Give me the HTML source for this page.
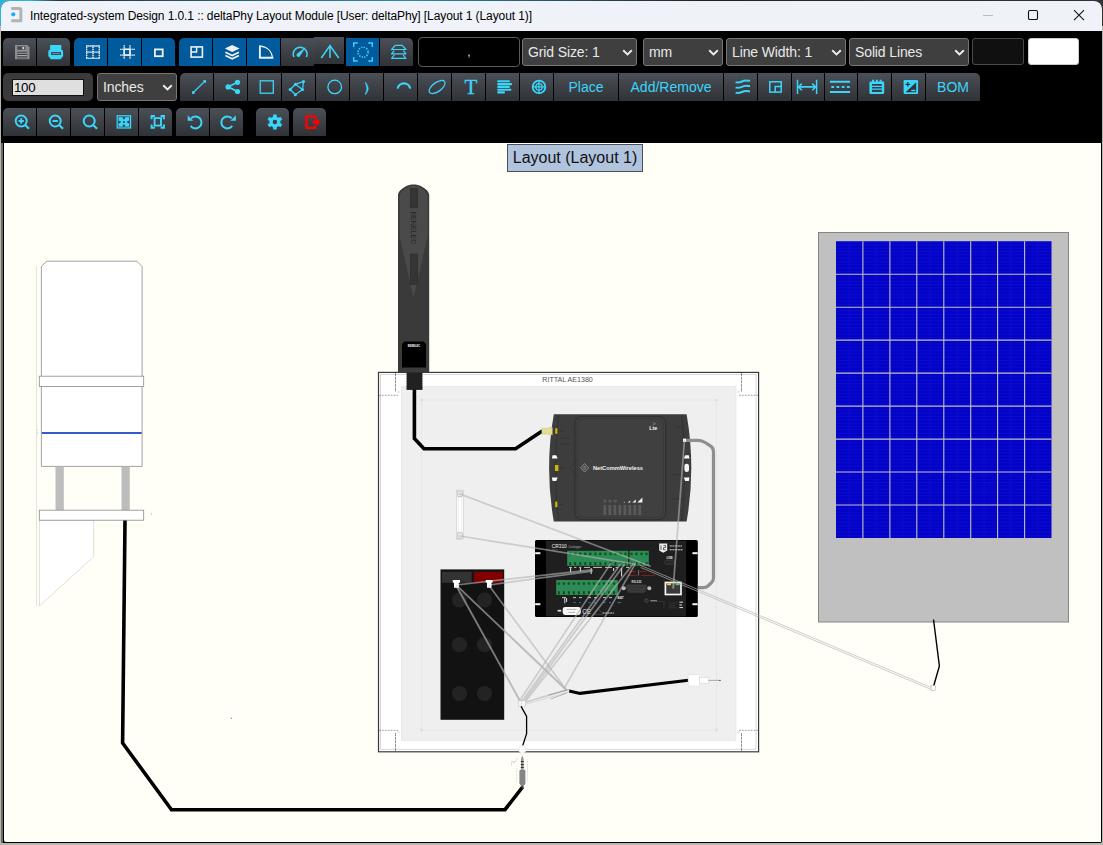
<!DOCTYPE html>
<html lang="en">
<head>
<meta charset="utf-8">
<title>Integrated-system Design 1.0.1 :: deltaPhy Layout Module</title>
<style>
*{box-sizing:border-box;margin:0;padding:0}
html,body{width:1103px;height:845px;overflow:hidden;background:#1b2a33;font-family:"Liberation Sans",Arial,sans-serif}
#desk{position:absolute;left:0;top:0;width:1103px;height:845px;background:linear-gradient(90deg,#2bb5d8 0,#2bb5d8 30px,#243038 60px,#2d8aa8 400px,#222 700px,#333 1103px)}
#edgeL{position:absolute;left:0;top:26px;width:1103px;height:819px;background:#b7b7b2}
#win{position:absolute;left:1px;top:1px;width:1101px;height:842px;background:#000;border-radius:8px 8px 2px 2px;overflow:hidden}
#stripL{position:absolute;left:0;top:142px;width:2px;height:700px;background:#6a6a6a}
#title{position:absolute;left:0;top:0;width:1101px;height:30px;background:#eff3f9}
#title .cap{position:absolute;left:29px;top:7px;font-size:12px;line-height:16px;color:#000;white-space:nowrap;letter-spacing:-0.095px}
#title svg{position:absolute}
/* toolbar */
.b{position:absolute;width:33px;height:28px;background:linear-gradient(#4b4f57,#2f3236);color:#3bd5fa;font-size:14px;line-height:28px;text-align:center;white-space:nowrap}
.b.on{background:#005a9c}
.b svg{position:absolute;left:0;top:0;width:100%;height:100%;overflow:visible}
.tl{border-top-left-radius:5px}
.tr{border-top-right-radius:5px}
.sel{position:absolute;height:28px;background:#3f3f3f;border:1px solid #767676;border-radius:3px;color:#e8e8e8;font-size:14px;line-height:27px;padding-left:5px;letter-spacing:-0.12px;white-space:nowrap}
.sel svg{position:absolute;right:3.5px;top:9.5px;width:11px;height:7px}
#canvas{position:absolute;left:3px;top:142px;width:1097px;height:699px;border-radius:0 0 0 2px;background:#fffff8;overflow:hidden}
#canvas svg{position:absolute;left:0;top:0}
</style>
</head>
<body>
<div id="desk"></div>
<div id="edgeL"></div>
<div id="win">
 <div id="title">
  <svg style="left:8px;top:5px" width="16" height="18" viewBox="0 0 16 18"><path d="M2.2 1.1H10.5Q13.3 1.1 13.3 3.9V16.3H2.2V13.3H10.3V4.1H2.2Z" fill="#b3b3b3"/><circle cx="4.3" cy="8.3" r="2.1" fill="#2aa8ff"/></svg>
  <div class="cap">Integrated-system Design 1.0.1 :: deltaPhy Layout Module [User: deltaPhy] [Layout 1 (Layout 1)]</div>
  <svg style="left:980px;top:8px" width="110" height="14" viewBox="0 0 110 14"><path d="M2 6.5H12" stroke="#b9bcc1" stroke-width="1"/><rect x="47.5" y="1.5" width="9" height="9" rx="1.3" fill="none" stroke="#111" stroke-width="1.1"/><path d="M93 1.2L103 11.2M103 1.2L93 11.2" stroke="#111" stroke-width="1.1"/></svg>
 </div>
 <div id="tb" style="position:absolute;left:-1px;top:-1px">
<div class="b tl" style="left:3px;top:38px"><svg viewBox="0 0 33 28"><path d="M12 7H24.3L26.5 9.2V21.2H12Z" fill="#8c8c8c"/><rect x="14.2" y="8.4" width="8.2" height="3.3" fill="#45484e"/><rect x="19.3" y="8.9" width="1.9" height="2.3" fill="#cfcfcf"/><rect x="14.2" y="13.8" width="10" height="7.4" fill="#3a3d42"/><path d="M14.2 15.2H24.2M14.2 17.6H24.2M14.2 20H24.2" stroke="#a8a8a8" stroke-width="1.1"/></svg></div>
<div class="b tr" style="left:37px;top:38px"><svg viewBox="0 0 33 28"><rect x="13.1" y="6.9" width="11.2" height="5.5" rx="0.6" fill="#3bd5fa"/><rect x="11.3" y="11.4" width="14.8" height="8.6" rx="2.4" fill="#3bd5fa"/><rect x="13.1" y="18.5" width="11.2" height="2.8" rx="0.8" fill="#3bd5fa"/><rect x="14" y="14.2" width="10" height="2.6" fill="#2f3338"/><rect x="14.6" y="15" width="8.8" height="1" fill="#70808a"/></svg></div>
<div class="b on tl" style="left:74px;top:38px"><svg viewBox="0 0 33 28"><path d="M12 8H26M12 14.2H26M12 20.4H26M12.65 7.4V21M19 7.4V21M25.35 7.4V21" stroke="#f0f0f0" stroke-width="1.3" stroke-dasharray="1.2 0.8" stroke-dashoffset="0.5" fill="none"/><path d="M12 8H26M12 14.2H26M12 20.4H26M12.65 7.4V21M19 7.4V21M25.35 7.4V21" stroke="#f0f0f0" stroke-width="1.3" stroke-opacity="0.4" fill="none"/></svg></div>
<div class="b on" style="left:108px;top:38px"><svg viewBox="0 0 33 28"><path d="M16.2 7V21M22 7V21M12 11.3H27M12 17.1H27" stroke="#f0f0f0" stroke-width="1.3" stroke-dasharray="1.2 0.8" stroke-dashoffset="0.4" fill="none"/><path d="M16.2 7V21M22 7V21M12 11.3H27M12 17.1H27" stroke="#f0f0f0" stroke-width="1.3" stroke-opacity="0.3" fill="none"/><rect x="16.2" y="11.3" width="5.8" height="5.8" fill="none" stroke="#f0f0f0" stroke-width="1.5"/></svg></div>
<div class="b on tr" style="left:142px;top:38px"><svg viewBox="0 0 33 28"><rect x="12.9" y="11.4" width="7.8" height="6.8" fill="none" stroke="#f0f0f0" stroke-width="1.8"/></svg></div>
<div class="b on tl" style="left:179px;top:38px"><svg viewBox="0 0 33 28"><rect x="12.1" y="8.9" width="11.3" height="10.2" fill="none" stroke="#f0f0f0" stroke-width="1.6"/><path d="M17.6 8.9V13.9H12.1" fill="none" stroke="#f0f0f0" stroke-width="1.5"/></svg></div>
<div class="b on" style="left:213px;top:38px"><svg viewBox="0 0 33 28"><path d="M19.2 6.9L26.6 10.5L19.2 14.1L11.8 10.5Z" fill="#f0f0f0"/><path d="M12.4 14.3L19.2 17.6L26 14.3M12.4 17.5L19.2 20.8L26 17.5" fill="none" stroke="#f0f0f0" stroke-width="1.7" stroke-linejoin="miter"/></svg></div>
<div class="b on" style="left:247px;top:38px"><svg viewBox="0 0 33 28"><path d="M12.9 7.4V19.7H26.4" fill="none" stroke="#f0f0f0" stroke-width="1.9"/><path d="M12.9 8.1C20 8.6 24.8 13 25.5 19.7" fill="none" stroke="#f0f0f0" stroke-width="1.2"/></svg></div>
<div class="b" style="left:281px;top:38px"><svg viewBox="0 0 33 28"><path d="M12.9 19A6.9 6.9 0 1 1 25.4 19" fill="none" stroke="#3bd5fa" stroke-width="1.5"/><path d="M24.9 9.1L19.4 17.6A2 2 0 1 1 16.6 15.2Z" fill="#3bd5fa"/></svg></div>
<div class="b raised" style="left:314px;top:37px;width:30px;height:27px"><svg viewBox="0 0 30 27"><path d="M7.3 21L16 8.6L24.7 21M16 8.6V21" fill="none" stroke="#3bd5fa" stroke-width="1.5"/></svg></div>
<div class="b on" style="left:346px;top:38px"><svg viewBox="0 0 33 28"><path d="M7.7 9V5H11.7M22.3 5H26.3V9M26.3 19V23H22.3M11.7 23H7.7V19" fill="none" stroke="#3bd5fa" stroke-width="1.4"/><circle cx="17.1" cy="14.2" r="5" fill="none" stroke="#3bd5fa" stroke-width="1.7" stroke-dasharray="1.3 1.32"/></svg></div>
<div class="b tr" style="left:380px;top:38px"><svg viewBox="0 0 33 28"><path d="M15.2 7.3H22.3L25.9 11.5H11.6Z" fill="none" stroke="#3bd5fa" stroke-width="1.2" stroke-linejoin="round"/><path d="M14.1 12.6L11.6 15.9H25.9L23.4 12.6" fill="none" stroke="#3bd5fa" stroke-width="1.2" stroke-linejoin="round"/><path d="M14.4 16.9L11.6 20.4H25.9L23.1 16.9" fill="none" stroke="#3bd5fa" stroke-width="1.2" stroke-linejoin="round"/></svg></div>
<div id="coord" style="position:absolute;left:418px;top:37px;width:102px;height:30px;border:1px solid #5a5a5a;border-radius:4px;background:#000;color:#ddd;font-size:12px;line-height:28px;text-align:center">,</div>
<div class="sel" style="left:522px;top:38px;width:115px">Grid Size: 1<svg viewBox="0 0 11 7"><path d="M1.2 1.2L5.5 5.4L9.8 1.2" fill="none" stroke="#eee" stroke-width="1.9"/></svg></div>
<div class="sel" style="left:643px;top:38px;width:80px">mm<svg viewBox="0 0 11 7"><path d="M1.2 1.2L5.5 5.4L9.8 1.2" fill="none" stroke="#eee" stroke-width="1.9"/></svg></div>
<div class="sel" style="left:726px;top:38px;width:120px">Line Width: 1<svg viewBox="0 0 11 7"><path d="M1.2 1.2L5.5 5.4L9.8 1.2" fill="none" stroke="#eee" stroke-width="1.9"/></svg></div>
<div class="sel" style="left:849px;top:38px;width:120px">Solid Lines<svg viewBox="0 0 11 7"><path d="M1.2 1.2L5.5 5.4L9.8 1.2" fill="none" stroke="#eee" stroke-width="1.9"/></svg></div>
<div style="position:absolute;left:972px;top:38px;width:52px;height:27px;border:1px solid #4a4a4a;border-radius:3px;background:#101010"></div>
<div style="position:absolute;left:1028px;top:38px;width:51px;height:27px;border:1px solid #ccc;border-radius:3px;background:#fff"></div>
<div style="position:absolute;left:3px;top:73px;width:90px;height:28px;border-radius:5px;background:#3a3a3a"></div>
<div style="position:absolute;left:12px;top:79px;width:72px;height:17px;background:#dfdfdf;border:1px solid #111;color:#000;font-size:13.3px;line-height:15px;padding-left:1px;letter-spacing:-0.3px">100</div>
<div class="sel" style="left:97px;top:73px;width:80px">Inches<svg viewBox="0 0 11 7"><path d="M1.2 1.2L5.5 5.4L9.8 1.2" fill="none" stroke="#eee" stroke-width="1.9"/></svg></div>
<div class="b tl" style="left:180px;top:73px"><svg viewBox="0 0 33 28"><path d="M13.3 19.5L24.7 8.4" stroke="#3bd5fa" stroke-width="1.3"/><rect x="12" y="18.3" width="2.6" height="2.6" fill="#3bd5fa"/><rect x="23.4" y="7.1" width="2.6" height="2.6" fill="#3bd5fa"/></svg></div>
<div class="b" style="left:214px;top:73px"><svg viewBox="0 0 33 28"><path d="M23.5 9.3L14.1 13.9L23.5 18.5" fill="none" stroke="#3bd5fa" stroke-width="1.8"/><circle cx="14.1" cy="13.9" r="2.6" fill="#3bd5fa"/><circle cx="23.5" cy="9.3" r="2.6" fill="#3bd5fa"/><circle cx="23.5" cy="18.5" r="2.6" fill="#3bd5fa"/></svg></div>
<div class="b" style="left:248px;top:73px"><svg viewBox="0 0 33 28"><rect x="12.2" y="7.8" width="13.1" height="12.4" fill="none" stroke="#3bd5fa" stroke-width="1.3"/></svg></div>
<div class="b" style="left:282px;top:73px"><svg viewBox="0 0 33 28"><path d="M8.1 16.5L13.4 11.3L21.5 8.5L20.5 16.5L13.4 21.7ZM13.4 11.3L20.5 16.5" fill="none" stroke="#3bd5fa" stroke-width="1.3"/><circle cx="8.1" cy="16.5" r="1.5" fill="#3bd5fa"/><circle cx="13.4" cy="11.3" r="1.5" fill="#3bd5fa"/><circle cx="21.5" cy="8.5" r="1.5" fill="#3bd5fa"/><circle cx="20.5" cy="16.5" r="1.5" fill="#3bd5fa"/><circle cx="13.4" cy="21.7" r="1.5" fill="#3bd5fa"/></svg></div>
<div class="b" style="left:316px;top:73px"><svg viewBox="0 0 33 28"><circle cx="18.7" cy="13.9" r="6.8" fill="none" stroke="#3bd5fa" stroke-width="1.3"/></svg></div>
<div class="b" style="left:350px;top:73px"><svg viewBox="0 0 33 28"><path d="M15.4 9.2Q21 15.5 15.4 21.7Q18.4 15.5 15.4 9.2Z" fill="#3bd5fa" stroke="#3bd5fa" stroke-width="0.7"/></svg></div>
<div class="b" style="left:384px;top:73px"><svg viewBox="0 0 33 28"><path d="M13.6 15.6A6.4 6.4 0 0 1 26.2 15.6" fill="none" stroke="#3bd5fa" stroke-width="2.2"/></svg></div>
<div class="b" style="left:418px;top:73px"><svg viewBox="0 0 33 28"><ellipse cx="19.1" cy="14" rx="9.3" ry="4.5" transform="rotate(-36 19.1 14)" fill="none" stroke="#3bd5fa" stroke-width="1.3"/></svg></div>
<div class="b" style="left:452px;top:73px"><svg viewBox="0 0 33 28"><text x="19" y="20.8" font-family="Liberation Serif,serif" font-size="21" text-anchor="middle" fill="#3bd5fa" stroke="#3bd5fa" stroke-width="0.3">T</text></svg></div>
<div class="b" style="left:486px;top:73px"><svg viewBox="0 0 33 28"><path d="M11.4 8.3H23.7M11.4 11.1H25.9M11.4 13.9H23.7M11.4 16.7H25.3M11.4 19.4H18.8" stroke="#3bd5fa" stroke-width="2.1"/></svg></div>
<div class="b" style="left:520px;top:73px"><svg viewBox="0 0 33 28"><circle cx="19" cy="13.9" r="6.3" fill="none" stroke="#3bd5fa" stroke-width="1.8"/><circle cx="19" cy="13.9" r="3.2" fill="none" stroke="#3bd5fa" stroke-width="1.3"/><path d="M19 7V20.8M12 13.9H26" stroke="#3bd5fa" stroke-width="1.2"/></svg></div>
<div class="b" style="left:554px;top:73px;width:64px">Place</div>
<div class="b" style="left:619px;top:73px;width:104px">Add/Remove</div>
<div class="b" style="left:724px;top:73px"><svg viewBox="0 0 33 28"><path d="M11.6 9.1C15 10.5 17.6 8.4 20 7.8 C22.5 7.199999999999999 24 7.8 26 7.8" fill="none" stroke="#3bd5fa" stroke-width="2"/><path d="M11.6 14.4C15 15.8 17.6 13.700000000000001 20 13.1 C22.5 12.5 24 13.1 26 13.1" fill="none" stroke="#3bd5fa" stroke-width="2"/><path d="M11.6 19.6C15 21.0 17.6 18.900000000000002 20 18.3 C22.5 17.700000000000003 24 18.3 26 18.3" fill="none" stroke="#3bd5fa" stroke-width="2"/></svg></div>
<div class="b" style="left:758px;top:73px"><svg viewBox="0 0 33 28"><rect x="11.8" y="8.8" width="11.4" height="10.3" fill="none" stroke="#3bd5fa" stroke-width="1.5"/><path d="M17.2 19V13.6H23.1" fill="none" stroke="#3bd5fa" stroke-width="1.5"/></svg></div>
<div class="b" style="left:792px;top:73px;width:32px"><svg viewBox="0 0 32 28"><path d="M5.5 6.8V21.1M24.6 6.8V21.1" stroke="#3bd5fa" stroke-width="1.5"/><path d="M6.5 13.9H23.6" stroke="#3bd5fa" stroke-width="1.6"/><path d="M9.8 10.6L6.5 13.9L9.8 17.2M20.3 10.6L23.6 13.9L20.3 17.2" fill="none" stroke="#3bd5fa" stroke-width="1.5"/></svg></div>
<div class="b" style="left:825px;top:73px;width:32px"><svg viewBox="0 0 32 28"><path d="M4.9 8.8H25.1M4.9 18.9H25.1" stroke="#3bd5fa" stroke-width="2"/><path d="M6.3 13.9H25.1" stroke="#3bd5fa" stroke-width="2" stroke-dasharray="2.8 2.4"/></svg></div>
<div class="b" style="left:858px;top:73px"><svg viewBox="0 0 33 28"><rect x="11.4" y="8.6" width="14.8" height="12.4" rx="1.2" fill="#3bd5fa"/><rect x="14" y="6.7" width="2" height="3" fill="#3bd5fa"/><rect x="17.8" y="6.7" width="2" height="3" fill="#3bd5fa"/><rect x="21.6" y="6.7" width="2" height="3" fill="#3bd5fa"/><rect x="14" y="11" width="9.8" height="8" fill="#33404a"/><path d="M14 13.4H23.8M14 16.2H23.8" stroke="#3bd5fa" stroke-width="1.3"/></svg></div>
<div class="b" style="left:892px;top:73px"><svg viewBox="0 0 33 28"><rect x="11.6" y="7.1" width="14.5" height="13.9" rx="1.2" fill="#3bd5fa"/><path d="M24.2 9.2V19.2H13.6Z" fill="#2f343a"/><path d="M15.8 9V13.6M13.5 11.3H18.1" stroke="#2f343a" stroke-width="1.3"/><path d="M19.2 17.4H23.4" stroke="#3bd5fa" stroke-width="1.5"/></svg></div>
<div class="b tr" style="left:926px;top:73px;width:54px">BOM</div>
<div class="b tl" style="left:3px;top:108px"><svg viewBox="0 0 33 28"><circle cx="18.2" cy="13" r="5.5" fill="none" stroke="#3bd5fa" stroke-width="2"/><path d="M22.2 17L26 20.7" stroke="#3bd5fa" stroke-width="2.1"/><path d="M18.2 10.3V15.7M15.5 13H20.9" stroke="#3bd5fa" stroke-width="1.9"/></svg></div>
<div class="b" style="left:37px;top:108px"><svg viewBox="0 0 33 28"><circle cx="18.2" cy="13" r="5.5" fill="none" stroke="#3bd5fa" stroke-width="2"/><path d="M22.2 17L26 20.7" stroke="#3bd5fa" stroke-width="2.1"/><path d="M15.5 13H20.9" stroke="#3bd5fa" stroke-width="1.9"/></svg></div>
<div class="b" style="left:71px;top:108px"><svg viewBox="0 0 33 28"><circle cx="18.2" cy="13" r="5.5" fill="none" stroke="#3bd5fa" stroke-width="2"/><path d="M22.2 17L26 20.7" stroke="#3bd5fa" stroke-width="2.1"/></svg></div>
<div class="b" style="left:105px;top:108px"><svg viewBox="0 0 33 28"><rect x="12.2" y="7.8" width="13.4" height="12.2" fill="#3bd5fa" stroke="#3bd5fa" stroke-width="1.2"/><rect x="13.2" y="8.8" width="11.4" height="10.2" fill="none" stroke="#34424c" stroke-width="0.7"/><path d="M17.2 9.2H20.6L18.9 11.8ZM17.2 18.6H20.6L18.9 16ZM13.6 12.4V15.4L16.4 13.9ZM24.2 12.4V15.4L21.4 13.9Z" fill="#2c3a44"/><circle cx="18.9" cy="13.9" r="1" fill="#2c3a44"/></svg></div>
<div class="b tr" style="left:139px;top:108px"><svg viewBox="0 0 33 28"><path d="M12.6 11.2V7.9H15.9M21.6 7.9H24.9V11.2M24.9 16.5V19.8H21.6M15.9 19.8H12.6V16.5" fill="none" stroke="#3bd5fa" stroke-width="2"/><rect x="15.6" y="10.1" width="6.4" height="7.5" fill="none" stroke="#3bd5fa" stroke-width="1.9"/></svg></div>
<div class="b tl" style="left:176px;top:108px"><svg viewBox="0 0 33 28"><path d="M14.6 17.9A6 6 0 1 0 15.2 10.2" fill="none" stroke="#3bd5fa" stroke-width="2"/><path d="M11.7 7.2V12.7H17.2Z" fill="#3bd5fa"/></svg></div>
<div class="b tr" style="left:210px;top:108px"><svg viewBox="0 0 33 28"><path d="M22.2 17.9A6 6 0 1 1 21.6 10.2" fill="none" stroke="#3bd5fa" stroke-width="2"/><path d="M25.9 7.2V12.7H20.4Z" fill="#3bd5fa"/></svg></div>
<div class="b tl tr" style="left:256px;top:108px"><svg viewBox="0 0 33 28"><path d="M17.24 9.07L17.51 6.73L20.29 6.73L20.56 9.07L22.34 10.10L24.50 9.16L25.89 11.57L24.00 12.97L24.00 15.03L25.89 16.43L24.50 18.84L22.34 17.90L20.56 18.93L20.29 21.27L17.51 21.27L17.24 18.93L15.46 17.90L13.30 18.84L11.91 16.43L13.80 15.03L13.80 12.97L11.91 11.57L13.30 9.16L15.46 10.10Z" fill="#3bd5fa" stroke="#3bd5fa" stroke-width="0.6" stroke-linejoin="round"/><circle cx="18.9" cy="14" r="2.2" fill="#383c42"/></svg></div>
<div class="b tl tr" style="left:293px;top:108px"><svg viewBox="0 0 33 28"><path d="M22 10.6V8.3H13.4V19.8H22V17.4" fill="none" stroke="#f00" stroke-width="2.3"/><path d="M20 12.2H23.6V9.6L27.2 14L23.6 18.4V15.8H20Z" fill="#f00"/></svg></div>
 </div>
 <div id="stripL"></div>
 <div id="canvas">
<svg width="1097" height="699" viewBox="4 143 1097 699" font-family="Liberation Sans,Arial,sans-serif">
<!-- title label -->
<rect x="507.5" y="144.5" width="135" height="27" fill="#b0c4de" stroke="#4a4f58" stroke-width="1"/>
<text x="575" y="163.4" font-size="16" text-anchor="middle" fill="#111">Layout (Layout 1)</text>

<!-- rain gauge (left) -->
<g id="gauge" stroke="#8a8a8a" stroke-width="0.8" fill="#fff">
 <path d="M36.5 266V606" stroke="#d8d8d2" stroke-width="0.7" fill="none"/>
 <path d="M41.4 266.5L46.6 261.2H136.9L142.1 266.5V466.4H41.4Z"/>
 <rect x="39.3" y="376.2" width="104.4" height="10.2"/>
 <path d="M41.8 433H141.7" stroke="#3558cc" stroke-width="2"/>
 <rect x="55.5" y="466.8" width="8.3" height="43.4" fill="#bdbdbd" stroke="none"/>
 <rect x="121.5" y="466.8" width="8.3" height="43.4" fill="#bdbdbd" stroke="none"/>
 <path d="M39.4 520.2H93.7V556.6L39.4 606Z" stroke="#d2d2cc" stroke-width="0.7"/>
 <rect x="39.3" y="510.2" width="104.4" height="10"/>
 <text x="33" y="436" font-size="2.4" fill="#999" stroke="none" transform="rotate(-90 35 433)">0.5 m</text>
 <circle cx="151.5" cy="514" r="0.7" fill="#bbb" stroke="none"/>
 <circle cx="231.3" cy="718.2" r="0.7" fill="#88a" stroke="none"/>
</g>
<!-- thick cable gauge -> jack -->
<path d="M125 520.5L122.6 743L171.5 809.7H505L522.6 787" fill="none" stroke="#000" stroke-width="3.6" stroke-linejoin="miter"/>

<!-- solar panel -->
<g id="solar">
 <rect x="818.5" y="232.5" width="250" height="389.5" fill="#c0c0c0" stroke="#858585" stroke-width="1"/>
 <defs><pattern id="cell" x="836" y="241.2" width="26.94" height="3.3" patternUnits="userSpaceOnUse"><rect width="26.94" height="3.3" fill="#0303c8"/><rect y="0" width="26.94" height="0.9" fill="#0b0bd0"/><rect x="12.8" y="0" width="1.2" height="3.3" fill="#0a0ad2" opacity="0.7"/></pattern></defs>
 <rect x="836" y="241.2" width="215.5" height="296.8" fill="url(#cell)"/>
 <path d="M862.9 241.2V538M889.9 241.2V538M916.8 241.2V538M943.8 241.2V538M970.7 241.2V538M997.6 241.2V538M1024.6 241.2V538M836 274.2H1051.5M836 307.2H1051.5M836 340.1H1051.5M836 373.1H1051.5M836 406.1H1051.5M836 439.1H1051.5M836 472H1051.5M836 505H1051.5" stroke="#bfbfbf" stroke-width="1.1" fill="none"/>
 <path d="M933.5 619.5L939.4 666L933.8 685.5" fill="none" stroke="#000" stroke-width="1.4"/>
 <rect x="931" y="685.6" width="4.6" height="4.8" fill="#fff" stroke="#aaa" stroke-width="0.5"/>
</g>

<!-- enclosure -->
<g id="encl">
 <rect x="378.5" y="372.4" width="380.1" height="379.4" fill="#fff" stroke="#3a3a3a" stroke-width="1.2"/>
 <rect x="380.6" y="374.4" width="375.4" height="374.8" fill="none" stroke="#cfcfcf" stroke-width="0.8"/>
 <rect x="401.5" y="386.2" width="334.5" height="354.3" fill="#efefef" stroke="#e2e2e2" stroke-width="0.6"/>
 <rect x="421.5" y="400" width="295" height="330" fill="none" stroke="#e4e4e4" stroke-width="0.7"/>
 <text x="567.6" y="382.3" font-size="7.1" text-anchor="middle" fill="#555">RITTAL AE1380</text>
 <!-- corner dimension marks -->
 <g stroke="#333" stroke-width="0.55" fill="none">
  <path d="M395.5 373V392M741.5 373V392M395.5 733V752M741.5 733V752" stroke-dasharray="3 0.7"/>
  <path d="M379 395.3H398M739 395.3H758M379 730.3H398M739 730.3H758" stroke-dasharray="1.8 1.1" stroke="#555"/>
 </g>
 <g fill="none" stroke="#c8c8c8" stroke-width="0.5">
  <circle cx="421.5" cy="400" r="1"/><circle cx="716.5" cy="400" r="1"/><circle cx="421.5" cy="730" r="1"/><circle cx="716.5" cy="730" r="1"/>
  <circle cx="398.5" cy="392" r="0.9"/><circle cx="738.5" cy="392" r="0.9"/><circle cx="398.5" cy="732" r="0.9"/><circle cx="738.5" cy="732" r="0.9"/>
 </g>
</g>

<!-- antenna -->
<g id="ant">
 <path d="M398 372.6V195.5C398 191.5 401.5 188.6 406 186.2C410 184 417.2 184 421.2 186.2C425.7 188.6 429.2 191.5 429.2 195.5V372.6Z" fill="#3a3a3a"/>
 <path d="M399.6 196C399.6 192 404 189.4 407 187.6C410.6 185.6 416.6 185.6 420.2 187.6C423.2 189.4 427.6 192 427.6 196V236L413.6 298L399.6 236Z" fill="#4a4a4a"/>
 <rect x="410.3" y="188.6" width="7.4" height="19.2" fill="#353535" stroke="#2c2c2c" stroke-width="0.6"/>
 <rect x="410.3" y="254" width="7.4" height="30.3" fill="#353535" stroke="#2c2c2c" stroke-width="0.6"/>
 <text x="0" y="0" font-size="6.4" fill="#242424" transform="translate(411.3 211.4) rotate(90)" textLength="33" lengthAdjust="spacingAndGlyphs">BENELEC</text>
 <path d="M402 367.6V344L404.5 341.5H423.5L426 344V367.6Z" fill="#000"/>
 <text x="414" y="346.8" font-size="2.6" font-weight="bold" text-anchor="middle" fill="#fff">BENELEC</text>
 <rect x="406.5" y="372.5" width="16" height="17.4" fill="#212121"/>
 <path d="M406 375H423M406 377.5H423M406 380H423M406 382.5H423M406 385H423" stroke="#efefef" stroke-width="0.5" stroke-dasharray="0.8 15.4"/>
</g>
<!-- antenna coax -->
<path d="M414.4 389.5V438.6L424 448.7H515.6L542.2 430.9" fill="none" stroke="#000" stroke-width="3.6"/>
<!-- small fuse holder -->
<g id="fuse">
 <rect x="456.4" y="490" width="7.1" height="49.6" fill="#fafafa" stroke="#c9c9d6" stroke-width="0.6"/>
 <rect x="458.4" y="497.5" width="3.1" height="34.5" fill="#fff" stroke="#ddd" stroke-width="0.4"/>
 <rect x="457.4" y="491" width="5.1" height="5.6" fill="#e6e6e6" stroke="#aaa" stroke-width="0.5"/>
 <rect x="457.4" y="532.8" width="5.1" height="5.6" fill="#e6e6e6" stroke="#aaa" stroke-width="0.5"/>
</g>

<!-- modem -->
<g id="modem">
 <path d="M553.8 414.2H686.6Q696 468 686.6 521.5H553.8Q544.4 468 553.8 414.2Z" fill="#3d3d3d"/>
 <path d="M558.6 415Q552.6 468 558.6 520.8M681.8 415Q687.8 468 681.8 520.8" fill="none" stroke="#2f2f2f" stroke-width="0.8"/>
 <rect x="574.9" y="416.4" width="90.8" height="103.2" rx="7" fill="#404040" stroke="#2d2d2d" stroke-width="0.9"/>
 <rect x="577.2" y="418.6" width="86.2" height="98.8" rx="5.5" fill="none" stroke="#373737" stroke-width="0.7"/>
 <path d="M577.5 458.5L569.8 468L577.5 477.5" fill="none" stroke="#2f2f2f" stroke-width="0.7"/>
 <!-- side tabs -->
 <path d="M552.6 455.3H556.2L557.6 458.6H551.9ZM551.9 477.6H557.6L556.2 481H552.6Z" fill="#fff"/>
 <path d="M685.2 455.3H688.8L689.5 458.6H683.8ZM683.8 477.6H689.5L688.8 481H685.2Z" fill="#fff"/>
 <rect x="684.4" y="463.8" width="4.6" height="8.2" rx="2.2" fill="#f4f4f4"/>
 <rect x="555.2" y="428.2" width="2.2" height="5.6" fill="#d4b400"/><rect x="555" y="465" width="3.4" height="6" fill="#d4b400"/><rect x="555.2" y="501.6" width="2.2" height="5.6" fill="#d4b400"/>
 <!-- SMA -->
 <path d="M541.8 428.4H549.4V427.6H552.4V434.8H549.4V434H541.8Z" fill="#e6dc98" stroke="#b8ad62" stroke-width="0.4"/>
 <!-- logo + text -->
 <path d="M584.6 463.6L588.6 467.8L584.6 472L580.6 467.8Z" fill="none" stroke="#bbb" stroke-width="0.6"/>
 <path d="M582.6 467.8H586.6M583.4 466.4H585.8M583.4 469.2H585.8" stroke="#bbb" stroke-width="0.5"/>
 <text x="593" y="470" font-size="5.7" font-weight="bold" fill="#f2f2f2" textLength="50" lengthAdjust="spacingAndGlyphs">NetCommWireless</text>
 <text x="649.2" y="429.8" font-size="5.4" font-weight="bold" fill="#f2f2f2">Lte</text>
 <path d="M652.8 422.4L655.4 423.7L652.8 425" fill="none" stroke="#aaa" stroke-width="0.5"/>
 <!-- LEDs -->
 <g fill="#5a5a5a">
  <rect x="603.5" y="505" width="2.7" height="10"/><rect x="608.5" y="505" width="2.7" height="10"/><rect x="613.5" y="505" width="2.7" height="10"/><rect x="618.5" y="505" width="2.7" height="10"/>
  <rect x="623.5" y="505" width="2.7" height="10"/><rect x="628.5" y="505" width="2.7" height="10"/><rect x="633.5" y="505" width="2.7" height="10"/><rect x="638.5" y="505" width="2.7" height="10"/>
 </g>
 <g fill="none" stroke="#888" stroke-width="0.4"><circle cx="604.8" cy="501.2" r="1.1"/><circle cx="609.8" cy="501.2" r="1.1"/><path d="M613.6 500.4H616.6L615.1 502.4Z"/></g>
 <path d="M620.4 502.6H619.4ZM624.8 502.6V501.6L623.6 502.6ZM630.2 502.6V500.6L627.8 502.6ZM635.8 502.6V499.6L632.4 502.6ZM642.4 502.6V497.6L637.4 502.6Z" fill="#f2f2f2"/>
 <!-- tiny side labels -->
 <g stroke="#2a2a2a" stroke-width="0.5"><path d="M559.5 431.3H563M559.5 438.2H570M559.5 444.2H570M559.5 467.6H564M559.5 504.4H563M676 427H682M672 474.6H681M672 499H684"/></g>
</g>

<!-- CR310 datalogger -->
<g id="cr310">
 <rect x="535" y="540" width="162.8" height="77" rx="1.6" fill="#000"/>
 <rect x="545.9" y="540.6" width="140.2" height="75.8" fill="#1f1f1f"/>
 <g fill="#f4f4f4"><rect x="535.2" y="552.2" width="5.2" height="2"/><rect x="535.2" y="603.2" width="5.2" height="2"/><rect x="692.4" y="552.2" width="5.2" height="2"/><rect x="692.4" y="603.2" width="5.2" height="2"/></g>
 <text x="551.8" y="547.5" font-size="5.6" fill="#f4f4f4" textLength="15" lengthAdjust="spacingAndGlyphs">CR310</text>
 <text x="568.6" y="547.8" font-size="2.6" fill="#aaa">Datalogger</text>
 <path d="M552 549.6H557.6" stroke="#777" stroke-width="0.4"/>
 <!-- green terminals -->
 <g fill="#2e8b57">
  <rect x="567.2" y="550.8" width="61" height="15"/><rect x="629.5" y="550.8" width="19.3" height="15"/>
  <rect x="556.2" y="580" width="61.6" height="15"/>
 </g>
 <g fill="#0a5a14"><circle cx="570.20" cy="553.9" r="1.3"/><circle cx="575.23" cy="553.9" r="1.3"/><circle cx="580.26" cy="553.9" r="1.3"/><circle cx="585.29" cy="553.9" r="1.3"/><circle cx="590.32" cy="553.9" r="1.3"/><circle cx="595.35" cy="553.9" r="1.3"/><circle cx="600.38" cy="553.9" r="1.3"/><circle cx="605.41" cy="553.9" r="1.3"/><circle cx="610.44" cy="553.9" r="1.3"/><circle cx="615.47" cy="553.9" r="1.3"/><circle cx="620.50" cy="553.9" r="1.3"/><circle cx="625.53" cy="553.9" r="1.3"/><circle cx="631.50" cy="553.9" r="1.3"/><circle cx="636.50" cy="553.9" r="1.3"/><circle cx="641.50" cy="553.9" r="1.3"/><circle cx="646.50" cy="553.9" r="1.3"/><circle cx="558.80" cy="583.6" r="1.3"/><circle cx="563.82" cy="583.6" r="1.3"/><circle cx="568.84" cy="583.6" r="1.3"/><circle cx="573.86" cy="583.6" r="1.3"/><circle cx="578.88" cy="583.6" r="1.3"/><circle cx="583.90" cy="583.6" r="1.3"/><circle cx="588.92" cy="583.6" r="1.3"/><circle cx="593.94" cy="583.6" r="1.3"/><circle cx="598.96" cy="583.6" r="1.3"/><circle cx="603.98" cy="583.6" r="1.3"/><circle cx="609.00" cy="583.6" r="1.3"/><circle cx="614.02" cy="583.6" r="1.3"/></g>
 <g fill="#0a4f12"><rect x="569.25" y="562.1" width="1.9" height="3.2"/><rect x="574.28" y="562.1" width="1.9" height="3.2"/><rect x="579.31" y="562.1" width="1.9" height="3.2"/><rect x="584.34" y="562.1" width="1.9" height="3.2"/><rect x="589.37" y="562.1" width="1.9" height="3.2"/><rect x="594.40" y="562.1" width="1.9" height="3.2"/><rect x="599.43" y="562.1" width="1.9" height="3.2"/><rect x="604.46" y="562.1" width="1.9" height="3.2"/><rect x="609.49" y="562.1" width="1.9" height="3.2"/><rect x="614.52" y="562.1" width="1.9" height="3.2"/><rect x="619.55" y="562.1" width="1.9" height="3.2"/><rect x="624.58" y="562.1" width="1.9" height="3.2"/><rect x="630.55" y="562.1" width="1.9" height="3.2"/><rect x="635.55" y="562.1" width="1.9" height="3.2"/><rect x="640.55" y="562.1" width="1.9" height="3.2"/><rect x="645.55" y="562.1" width="1.9" height="3.2"/><rect x="557.85" y="591.2" width="1.9" height="3.2"/><rect x="562.87" y="591.2" width="1.9" height="3.2"/><rect x="567.89" y="591.2" width="1.9" height="3.2"/><rect x="572.91" y="591.2" width="1.9" height="3.2"/><rect x="577.93" y="591.2" width="1.9" height="3.2"/><rect x="582.95" y="591.2" width="1.9" height="3.2"/><rect x="587.97" y="591.2" width="1.9" height="3.2"/><rect x="592.99" y="591.2" width="1.9" height="3.2"/><rect x="598.01" y="591.2" width="1.9" height="3.2"/><rect x="603.03" y="591.2" width="1.9" height="3.2"/><rect x="608.05" y="591.2" width="1.9" height="3.2"/><rect x="613.07" y="591.2" width="1.9" height="3.2"/></g>
 <!-- white tiny labels -->
 <g stroke="#d8d8d8" stroke-width="0.9" fill="none">
  <path d="M569 567.4H572M574 567.4H576.4M579 567.4H581.4M584 567.4H590M593 567.4H602M605 567.4H612M615.6 567.4H618M626 567.4H629" />
  <path d="M570.6 568V572M580.4 568V571.4M591.2 568V574M613.6 568V571M621.6 568V576.4" stroke-width="1.1"/>
 </g>
 <g stroke="#b02222" stroke-width="0.7" fill="none"><path d="M628 571.6H636M640 571.6H646M628 575.4H637M641 575.4H655"/><path d="M638.6 570V575.6" stroke="#999"/></g>
 <g stroke="#d8d8d8" stroke-width="0.9" fill="none">
  <path d="M562 597.6H566M573 597.6H576M579 597.6H582M588 597.6H591M594 597.6H597M603 597.6H606M609 597.6H612"/>
  <path d="M564.8 598V603.4M566.6 598V602" stroke-width="1"/>
 </g>
 <g stroke="#2f8fd8" stroke-width="0.8"><path d="M573.4 602.6H575.6M579 602.6H581M588.4 602.6H590.6M594 602.6H596M603.4 602.6H605.6M609 602.6H611M617.6 602.6H621"/></g>
 <text x="617.6" y="598.6" font-size="3" font-weight="bold" fill="#e8e8e8">BAT</text>
 <!-- RS-232 -->
 <text x="631.6" y="583" font-size="2.9" font-weight="bold" fill="#e0e0e0">RS-232</text>
 <path d="M627.2 584.6H645.6Q647.6 584.6 647 586.6L645.4 591.4Q644.8 593 643 593H629.8Q628 593 627.4 591.4L625.8 586.6Q625.2 584.6 627.2 584.6Z" fill="#3a3a3a" stroke="#2a2a2a" stroke-width="0.5"/>
 <path d="M630 587.4H643M631.6 590H641.4" stroke="#222" stroke-width="0.9" stroke-dasharray="0.9 1.5"/>
 <circle cx="623.7" cy="588.2" r="2" fill="#bdbdbd"/><circle cx="649.3" cy="588.2" r="2" fill="#bdbdbd"/>
 <!-- logo -->
 <path d="M659.2 543.6H667.2V550.4L663.2 552.8L659.2 550.4Z" fill="#f2f2f2"/>
 <path d="M661 545.4V550M663.4 545.4H665.6V547.6H663.4V549.8H665.6" stroke="#222" stroke-width="0.7" fill="none"/>
 <path d="M669.6 546H682M669.6 549.8H682.6" stroke="#cfcfcf" stroke-width="1.1" stroke-dasharray="2.2 0.5"/>
 <!-- USB -->
 <text x="666.6" y="558.6" font-size="2.9" font-weight="bold" fill="#e0e0e0">USB</text>
 <path d="M665.8 560.2H672.8L674.4 562.2L672.8 564.2H665.8L664.2 562.2Z" fill="#262626" stroke="#555" stroke-width="0.5"/>
 <!-- ethernet -->
 <rect x="665.4" y="582.5" width="15.6" height="12" fill="#3a3a3a" stroke="#f6f6f6" stroke-width="1.7"/>
 <rect x="667" y="583.4" width="4" height="1.8" fill="#e8d24a"/><rect x="675.6" y="583.4" width="4" height="1.8" fill="#58d058"/>
 <rect x="671.6" y="584" width="3.2" height="4.6" fill="#4a4a4a"/>
 <!-- bottom labels -->
 <rect x="562.7" y="607" width="18.1" height="7.9" rx="2.4" fill="#f8f8f8"/>
 <path d="M566.4 609.4H576.6M568.4 612.4H575" stroke="#999" stroke-width="0.7"/>
 <rect x="557.6" y="609.8" width="3.6" height="1.8" fill="#ddd"/>
 <text x="582.2" y="614.4" font-size="7.6" fill="#ededed" textLength="8.6" lengthAdjust="spacingAndGlyphs">CE</text>
 <path d="M594.2 614.6L598.4 608.4L602.6 614.6Z" fill="none" stroke="#555" stroke-width="0.5"/>
 <path d="M602.6 613H614" stroke="#cfcfcf" stroke-width="1" stroke-dasharray="2 0.5"/>
 <circle cx="646.6" cy="600.6" r="1.8" fill="#2a2a2a" stroke="#666" stroke-width="0.5"/>
 <path d="M650.4 600.8H657" stroke="#ccc" stroke-width="0.8"/><path d="M657 601.4H664V607.6" fill="none" stroke="#555" stroke-width="0.4"/>
 <path d="M668.2 603.2H676.6M668.2 607.8H676.6M669 605.6H675" stroke="#555" stroke-width="0.4"/>
 <path d="M679.4 602.2H683M679.4 605H682M679.4 607.6H683" stroke="#ddd" stroke-width="1"/>
</g>

<!-- battery -->
<g id="batt">
 <rect x="440.5" y="569.4" width="63.7" height="150.4" fill="#121212"/>
 <rect x="442" y="571.8" width="29.6" height="10.9" fill="#333"/>
 <rect x="473.8" y="571.8" width="29" height="10.9" fill="#800000"/>
 <g fill="#232323"><circle cx="459.5" cy="599.8" r="7.6"/><circle cx="484.5" cy="599.8" r="7.6"/><circle cx="459.5" cy="644.7" r="7.6"/><circle cx="484.5" cy="644.7" r="7.6"/><circle cx="459.5" cy="693.5" r="7.6"/><circle cx="484.5" cy="693.5" r="7.6"/></g>
</g>

<!-- grey ethernet cable -->
<path d="M685.2 440.3H698Q702 440.3 706 443L711 446.4Q713.5 448.2 713.5 452V578Q713.5 580.8 711.4 582.7L707.6 586.2Q706 587.6 703.6 587.6H697.8" fill="none" stroke="#8e8e8e" stroke-width="3.2" stroke-linejoin="round"/>
<rect x="683" y="438.6" width="3" height="3.4" fill="#f8f8f8"/>

<!-- rats-nest connection lines -->
<g id="rats" fill="none" stroke-linecap="round">
 <g stroke="#b4b4b4" stroke-opacity="0.62" stroke-width="1.7">
  <path d="M460 494L650 566"/><path d="M460 536L634.6 564"/>
  <path d="M456.2 585L592 569.8"/><path d="M489.2 585L592 571.2"/>
  <path d="M684.4 441L673.2 588"/>
 </g>
 <g stroke="#a6a6a6" stroke-opacity="0.7" stroke-width="1.9">
  <path d="M456.4 586L520.6 702"/><path d="M456.8 585.6L566.4 690"/>
 </g>
 <g stroke="#b4b4b4" stroke-opacity="0.62" stroke-width="1.7">
  <path d="M489.4 586L566 689.6"/>
  <path d="M519 701.6L610.7 563.6"/><path d="M521.8 701.6L620.6 564"/><path d="M523.6 701.8L624.4 564.4"/><path d="M524.6 702.4L632.6 564.4"/>
  <path d="M564.6 687.6L635.4 563.6"/>
  <path d="M523 703L566 690"/><path d="M524 704.6L567 692.6" stroke-width="0.7"/>
 </g>
 <g stroke="#b4b4b4" stroke-opacity="0.75" stroke-width="0.9">
  <path d="M640 565.2L931 687.4"/><path d="M641 567.6L932 689.8"/>
 </g>
 <path d="M549 695L569.4 689.6M551 699L567 692.8" stroke="#777" stroke-width="0.5"/>
</g>

<path d="M452.8 580H460V582.7H458.8V587.7H454V582.7H452.8ZM485.8 580H492.6V582.7H491.5V587.7H487V582.7H485.8Z" fill="#fff"/>
<path d="M455.4 586.6L457 585L457 586.6ZM488.2 586.6L489.8 585V586.6Z" fill="#bbb"/>
<!-- black sensor wire + connector -->
<path d="M569.2 691.1L580 693.4L688.4 680.2" fill="none" stroke="#000" stroke-width="3.1" stroke-linejoin="miter"/>
<rect x="688.2" y="674.6" width="11.4" height="11.6" rx="1" fill="#fff" stroke="#d8d8d8" stroke-width="0.6"/>
<rect x="699.6" y="677.4" width="9" height="5.8" fill="#fff" stroke="#d8d8d8" stroke-width="0.6"/>
<path d="M708.6 680.4H720" stroke="#666" stroke-width="0.5"/><circle cx="720" cy="680.4" r="0.6" fill="#222"/>

<!-- small connector + thin wire to jack -->
<rect x="518.5" y="700.8" width="7" height="5.4" fill="#f8f8f8" stroke="#c2c2c2" stroke-width="0.5"/>
<path d="M521.6 701V706.4" stroke="#bbb" stroke-width="0.5"/>
<path d="M521 706.4L522.2 708.4L526.6 716.4V733.6L522.6 746" fill="none" stroke="#000" stroke-width="1.3"/>
<path d="M519.2 747.4Q519.2 745.4 521.2 745.4H523.6Q525.6 745.4 525.6 747.4V752H524.4V754.8H520.4V752H519.2Z" fill="#fbfbfb" stroke="#ddd" stroke-width="0.4"/>
<!-- 3.5mm jack -->
<g id="jack">
 <path d="M522.3 755.4L523.6 758.4V769.6H521V758.4Z" fill="#9a9a9a"/>
 <path d="M520.8 761.6H523.8M520.8 764.6H523.8M520.8 767.4H523.8" stroke="#222" stroke-width="1"/>
 <path d="M519.4 771Q519.4 769.4 521 769.4H523.8Q525.4 769.4 525.4 771V783.4L524 785.6H520.8L519.4 783.4Z" fill="#858585"/>
 <path d="M521 785.4H523.8L523.2 788.4H521.6Z" fill="#444"/>
 <g stroke="#aaa" stroke-width="0.4" fill="none"><path d="M517.4 757.6L515.4 761.6H511.6V765.6M515.4 761.6L513 763.6"/><path d="M516.6 768.4V782M527.4 759.6V782" stroke-dasharray="0.8 0.6" stroke="#999"/></g>
</g>

</svg>

 </div>
</div>
</body>
</html>
